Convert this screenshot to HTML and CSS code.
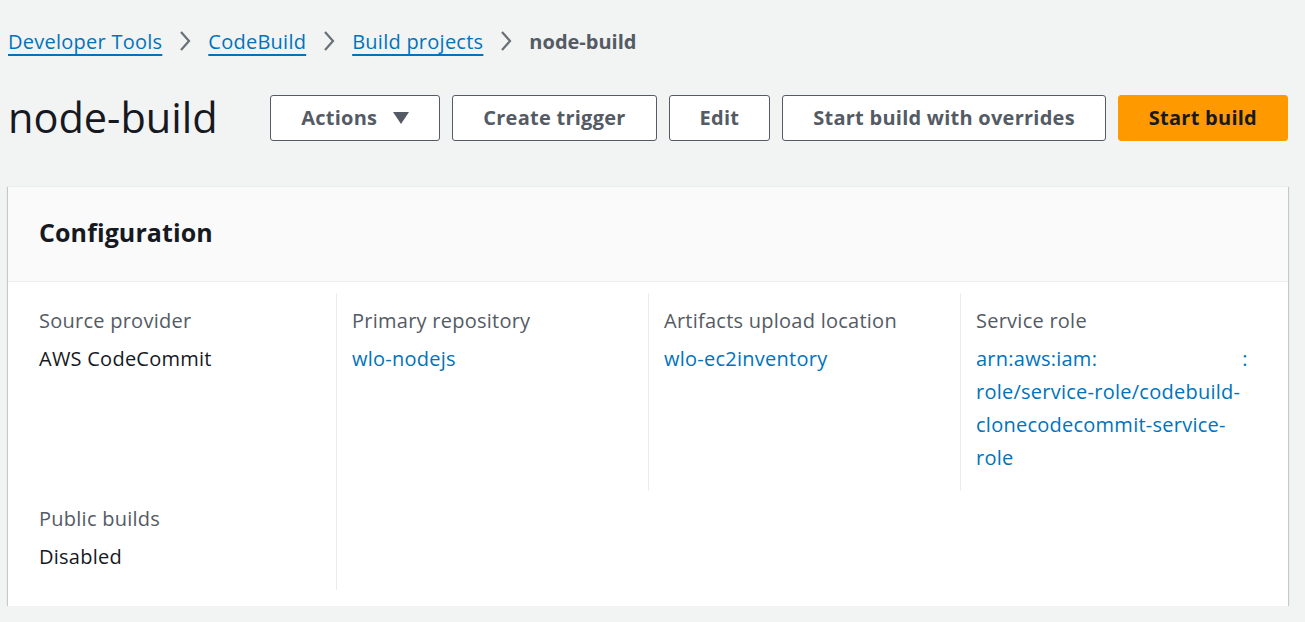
FILE: index.html
```html
<!DOCTYPE html>
<html lang="en">
<head>
<meta charset="utf-8">
<title>node-build</title>
<link rel="stylesheet" href="styles.css">
</head>
<body>
<div class="page">
  <nav class="crumbs">
    <a href="#" class="crumb-link">Developer Tools</a>
    <svg class="chev" viewBox="0 0 12 22" width="12" height="22"><path d="M2 2 L10 11 L2 20" fill="none" stroke="#687078" stroke-width="2.2"/></svg>
    <a href="#" class="crumb-link">CodeBuild</a>
    <svg class="chev" viewBox="0 0 12 22" width="12" height="22"><path d="M2 2 L10 11 L2 20" fill="none" stroke="#687078" stroke-width="2.2"/></svg>
    <a href="#" class="crumb-link">Build projects</a>
    <svg class="chev" viewBox="0 0 12 22" width="12" height="22"><path d="M2 2 L10 11 L2 20" fill="none" stroke="#687078" stroke-width="2.2"/></svg>
    <span class="crumb-current">node-build</span>
  </nav>

  <header class="head">
    <h1 class="title">node-build</h1>
    <div class="actions">
      <button class="btn">Actions <svg class="caret" viewBox="0 0 16 12" width="16" height="12"><path d="M0 0 H16 L8 12 Z" fill="#545b64"/></svg></button>
      <button class="btn">Create trigger</button>
      <button class="btn">Edit</button>
      <button class="btn">Start build with overrides</button>
      <button class="btn btn-primary">Start build</button>
    </div>
  </header>

  <section class="card">
    <div class="card-head">
      <h2 class="card-title">Configuration</h2>
    </div>
    <div class="card-body">
      <div class="grid">
        <div class="cell">
          <div class="label">Source provider</div>
          <div class="value">AWS CodeCommit</div>
        </div>
        <div class="cell div">
          <div class="label">Primary repository</div>
          <div class="value"><a href="#" class="link">wlo-nodejs</a></div>
        </div>
        <div class="cell div">
          <div class="label">Artifacts upload location</div>
          <div class="value"><a href="#" class="link">wlo-ec2inventory</a></div>
        </div>
        <div class="cell div">
          <div class="label">Service role</div>
          <div class="value"><a href="#" class="link">arn:aws:iam:<span class="redact"></span>:<br>role/service-role/codebuild-<br>clonecodecommit-service-<br>role</a></div>
        </div>
        <div class="cell">
          <div class="label">Public builds</div>
          <div class="value">Disabled</div>
        </div>
        <div class="cell div"></div>
      </div>
    </div>
  </section>
</div>
</body>
</html>
```

FILE: styles.css
```css
html, body {
  margin: 0;
  padding: 0;
  background: #f2f3f3;
}
body {
  font-family: "Open Sans", "Liberation Sans", Arial, sans-serif;
  color: #16191f;
  font-size: 20px;
  letter-spacing: 0.25px;
}
.page {
  padding: 0 17px 0 8px;
}
.crumbs {
  display: flex;
  align-items: center;
  height: 30px;
  margin-top: 26px;
  gap: 17px;
}
.crumb-link {
  color: #0073bb;
  text-decoration: underline;
  text-underline-offset: 5px;
  text-decoration-thickness: 2px;
}
.chev {
  display: block;
}
.crumb-current {
  color: #545b64;
  font-weight: 700;
  letter-spacing: 0;
}
.head {
  display: flex;
  align-items: center;
  justify-content: space-between;
  margin-top: 39px;
  height: 46px;
}
.title {
  margin: 0 0 3px 0;
  font-size: 41.5px;
  font-weight: 400;
  color: #16191f;
  line-height: 46px;
  letter-spacing: 0;
}
.actions {
  display: flex;
  gap: 12px;
}
.btn {
  height: 46px;
  padding: 0 30px 2px 30px;
  border: 1.5px solid #545b64;
  border-radius: 3px;
  background: #fff;
  color: #545b64;
  font-family: "Open Sans", "Liberation Sans", Arial, sans-serif;
  font-weight: 700;
  font-size: 20px;
  letter-spacing: 0.25px;
  display: flex;
  align-items: center;
  gap: 16px;
  white-space: nowrap;
}
.btn-primary {
  background: #ff9900;
  border-color: #ff9900;
  color: #16191f;
}
.caret {
  display: block;
  margin-top: 2px;
}
.card {
  margin-top: 45px;
  background: #fff;
  box-shadow: 0 1px 1px 0 rgba(0, 28, 36, 0.3), 1px 1px 1px 0 rgba(0, 28, 36, 0.15), -1px 1px 1px 0 rgba(0, 28, 36, 0.15);
  border-top: 1px solid #eaeded;
}
.card-head {
  background: #fafafa;
  border-bottom: 1px solid #eaeded;
  height: 94px;
  display: flex;
  align-items: center;
  padding-left: 31px;
}
.card-title {
  margin: 0 0 5px 0;
  font-size: 25px;
  font-weight: 700;
  color: #16191f;
  letter-spacing: 0.1px;
}
.card-body {
  padding: 11px 16px 16px 16px;
}
.grid {
  display: grid;
  grid-template-columns: repeat(4, 1fr);
}
.cell {
  padding: 11px 15px 17px 15px;
}
.cell.div {
  border-left: 1px solid #eaeded;
}
.label {
  color: #545b64;
  line-height: 33px;
  margin-bottom: 5px;
}
.value {
  line-height: 33px;
}
.link {
  color: #0073bb;
  text-decoration: none;
}
.redact {
  display: inline-block;
  width: 145px;
}
```
